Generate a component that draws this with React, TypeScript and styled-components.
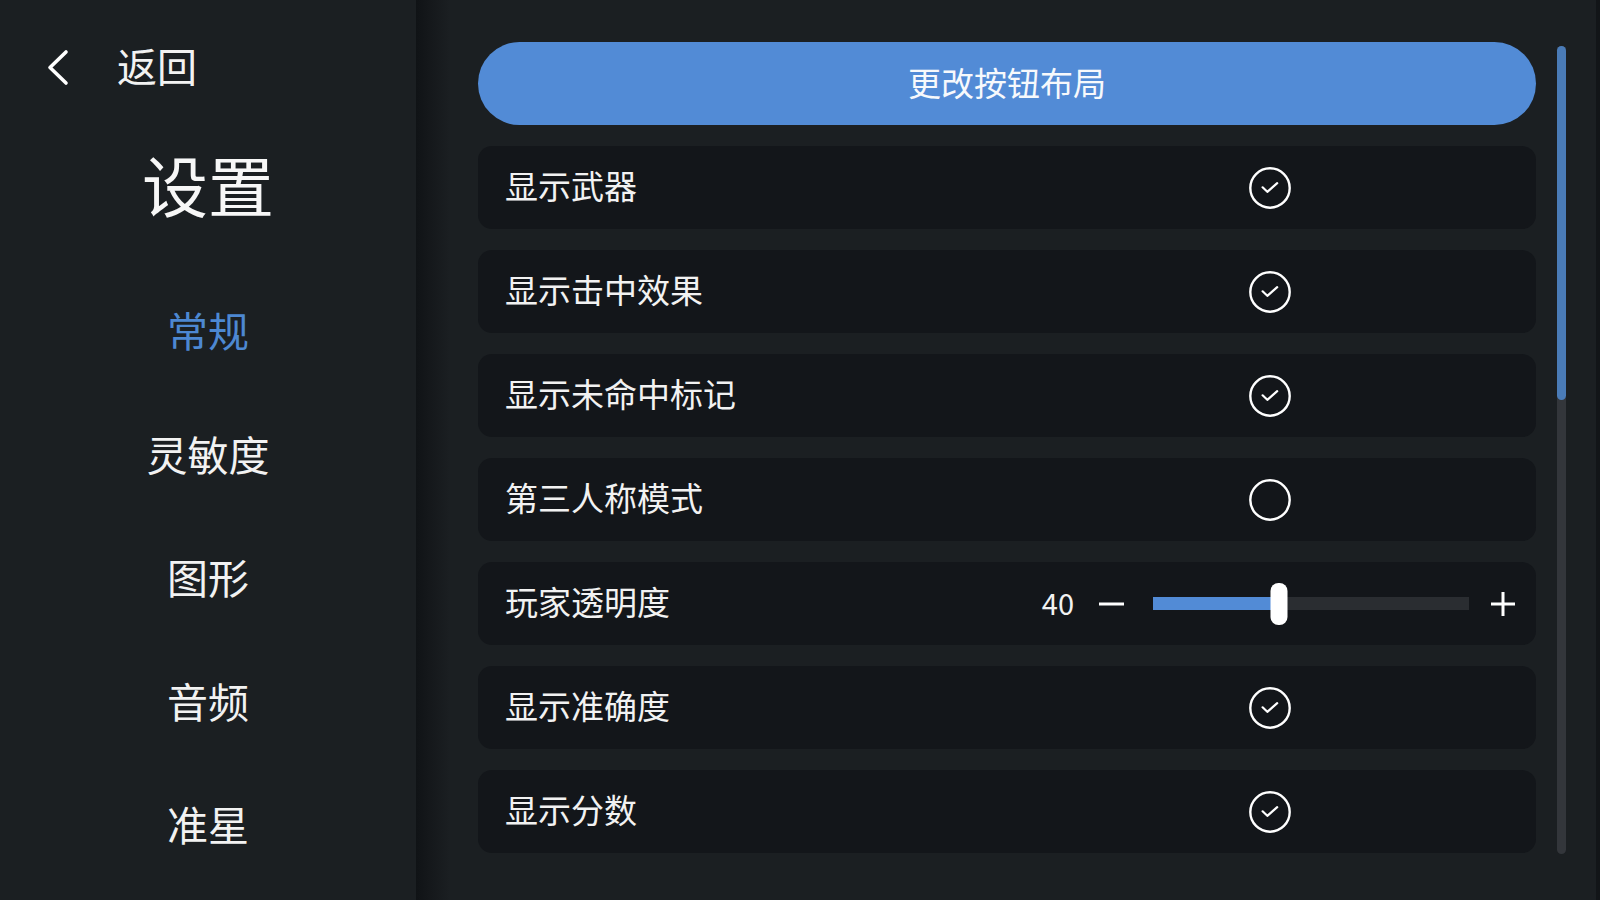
import React from "react";
import styled, { createGlobalStyle } from "styled-components";

const GlobalStyle = createGlobalStyle`
  html, body {
    margin: 0;
    padding: 0;
    background: #1b1f22;
    overflow: hidden;
  }
  body {
    font-family: "Noto Sans CJK SC", "Noto Sans", sans-serif;
    color: #f2f2f2;
  }
  * { box-sizing: border-box; }
`;

const Page = styled.div`
  display: flex;
  width: 1600px;
  height: 900px;
  background: #1b1f22;
  border-right: 4px solid #121518;
`;

const Sidebar = styled.aside`
  width: 416px;
  flex: none;
  display: flex;
  flex-direction: column;
  padding-top: 35px;
  background: #1b1f22;
`;

const BackRow = styled.button`
  display: flex;
  align-items: center;
  height: 60px;
  padding: 0 0 0 46px;
  gap: 47px;
  background: none;
  border: none;
  color: #f2f2f2;
  font-family: inherit;
  font-size: 40px;
  cursor: pointer;
  text-align: left;

  svg {
    margin-top: 4px;
  }
`;

const Title = styled.h1`
  margin: 38px 0 0;
  height: 100px;
  line-height: 100px;
  text-align: center;
  font-size: 66px;
  font-weight: 400;
  color: #f7f7f7;
`;

const NavList = styled.nav`
  display: flex;
  flex-direction: column;
  margin-top: 35px;
`;

const NavItem = styled.div<{ $active?: boolean }>`
  height: 123.5px;
  line-height: 123.5px;
  text-align: center;
  font-size: 41px;
  color: ${(p) => (p.$active ? "#4d88d2" : "#f2f2f2")};
`;

const Main = styled.main`
  flex: 1;
  display: flex;
  align-items: flex-start;
  gap: 21px;
  padding: 42px 0 0 62px;
  background: linear-gradient(to right, #101316 0px, #15181b 14px, #1b1f22 34px);
`;

const Content = styled.div`
  width: 1058px;
  display: flex;
  flex-direction: column;
  gap: 21px;
`;

const LayoutButton = styled.button`
  height: 83px;
  padding: 0 0 4px;
  border: none;
  border-radius: 42px;
  background: #528bd6;
  color: #f7f9fc;
  font-family: inherit;
  font-size: 33px;
  cursor: pointer;
`;

const Row = styled.div`
  height: 83px;
  display: grid;
  grid-template-columns: 1fr 1fr;
  align-items: center;
  background: #13161a;
  border-radius: 14px;
`;

const Label = styled.span`
  padding: 0 0 5px 27px;
  font-size: 33px;
  color: #f2f2f2;
`;

const CheckCell = styled.div`
  display: flex;
  justify-content: center;
  align-items: center;
  padding-right: 3px;
`;

const SliderCell = styled.div`
  display: flex;
  justify-content: flex-end;
  align-items: center;
  padding-right: 21px;
`;

const Value = styled.span`
  font-size: 29px;
  color: #f2f2f2;
  margin-right: 25px;
  padding-bottom: 4px;
`;

const IconButton = styled.button`
  display: flex;
  align-items: center;
  justify-content: center;
  padding: 0;
  background: none;
  border: none;
  cursor: pointer;
`;

const Track = styled.div`
  position: relative;
  width: 316px;
  height: 13px;
  margin: 0 22px 0 29px;
  background: #2a2d31;
`;

const Fill = styled.div`
  position: absolute;
  left: 0;
  top: 0;
  bottom: 0;
  background: #528bd6;
`;

const Thumb = styled.div`
  position: absolute;
  top: 50%;
  width: 17px;
  height: 42px;
  border-radius: 8px;
  background: #ffffff;
  transform: translate(-50%, -50%);
`;

const ScrollTrack = styled.div`
  width: 9px;
  height: 808px;
  margin-top: 4px;
  border-radius: 5px;
  background: #33363b;
  display: flex;
  flex-direction: column;
`;

const ScrollThumb = styled.div`
  height: 354px;
  border-radius: 5px;
  background: #4a7bb7;
`;

const ChevronLeft = () => (
  <svg width="24" height="40" viewBox="0 0 24 40" fill="none">
    <path d="M20 5 L4 20.5 L20 36" stroke="#ffffff" strokeWidth="3.6" strokeLinecap="round" strokeLinejoin="round" />
  </svg>
);

const CheckCircle = ({ checked }: { checked: boolean }) => (
  <svg width="42" height="42" viewBox="0 0 42 42" fill="none">
    <circle cx="21" cy="21" r="19.7" stroke="#ffffff" strokeWidth="2.4" />
    {checked && (
      <path d="M13.6 20.3 L18.3 24.8 L28.2 16.2" stroke="#ffffff" strokeWidth="2.2" strokeLinecap="round" strokeLinejoin="round" />
    )}
  </svg>
);

const MinusIcon = () => (
  <svg width="25" height="24" viewBox="0 0 25 24" fill="none">
    <path d="M0 12 H25" stroke="#ffffff" strokeWidth="3" />
  </svg>
);

const PlusIcon = () => (
  <svg width="24" height="24" viewBox="0 0 24 24" fill="none">
    <path d="M0 12 H24 M12 0 V24" stroke="#ffffff" strokeWidth="3" />
  </svg>
);

type Setting =
  | { kind: "check"; label: string; checked: boolean }
  | { kind: "slider"; label: string; value: number };

const settings: Setting[] = [
  { kind: "check", label: "显示武器", checked: true },
  { kind: "check", label: "显示击中效果", checked: true },
  { kind: "check", label: "显示未命中标记", checked: true },
  { kind: "check", label: "第三人称模式", checked: false },
  { kind: "slider", label: "玩家透明度", value: 40 },
  { kind: "check", label: "显示准确度", checked: true },
  { kind: "check", label: "显示分数", checked: true },
];

const navItems = ["常规", "灵敏度", "图形", "音频", "准星"];

export default function App() {
  return (
    <>
      <GlobalStyle />
      <Page>
        <Sidebar>
          <BackRow>
            <ChevronLeft />
            <span>返回</span>
          </BackRow>
          <Title>设置</Title>
          <NavList>
            {navItems.map((n, i) => (
              <NavItem key={n} $active={i === 0}>
                {n}
              </NavItem>
            ))}
          </NavList>
        </Sidebar>
        <Main>
          <Content>
            <LayoutButton>更改按钮布局</LayoutButton>
            {settings.map((s) => (
              <Row key={s.label}>
                <Label>{s.label}</Label>
                {s.kind === "check" ? (
                  <CheckCell>
                    <CheckCircle checked={s.checked} />
                  </CheckCell>
                ) : (
                  <SliderCell>
                    <Value>{s.value}</Value>
                    <IconButton>
                      <MinusIcon />
                    </IconButton>
                    <Track>
                      <Fill style={{ width: `${s.value}%` }} />
                      <Thumb style={{ left: `${s.value}%` }} />
                    </Track>
                    <IconButton>
                      <PlusIcon />
                    </IconButton>
                  </SliderCell>
                )}
              </Row>
            ))}
          </Content>
          <ScrollTrack>
            <ScrollThumb />
          </ScrollTrack>
        </Main>
      </Page>
    </>
  );
}
